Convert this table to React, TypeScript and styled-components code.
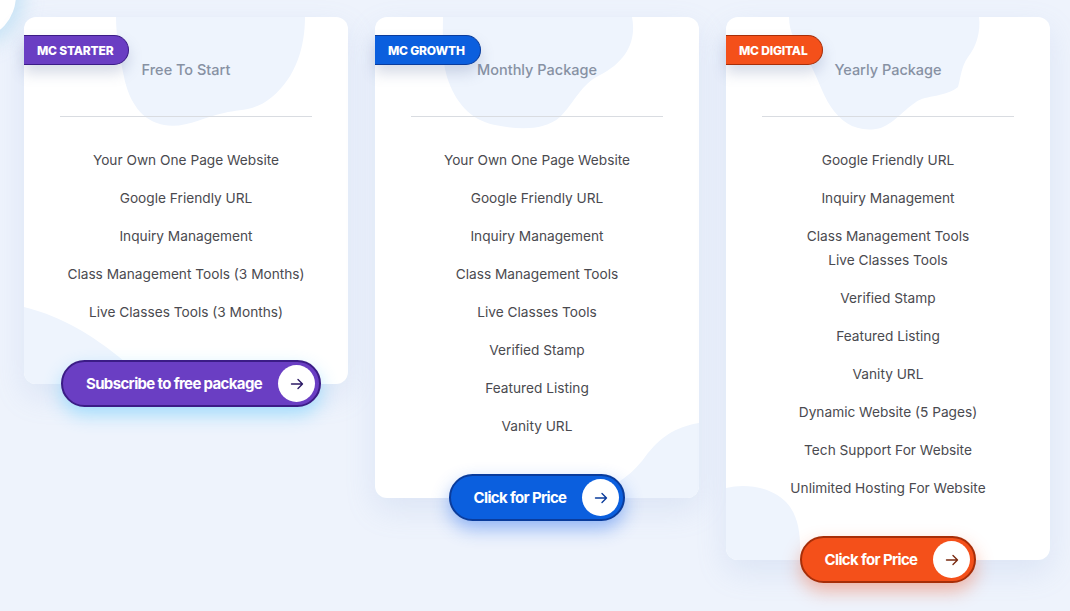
import React from "react";
import styled, { createGlobalStyle } from "styled-components";

const Global = createGlobalStyle`
  html, body { margin: 0; padding: 0; }
  body {
    background: #eef3fc;
    font-family: Inter, "Noto Sans", sans-serif;
    width: 1070px;
    height: 611px;
    overflow: hidden;
  }
`;

type Theme = { main: string; dark: string; glow: string; arrow: string };

const themes: Record<string, Theme> = {
  purple: { main: "#6a3ec3", dark: "#3b1c86", glow: "rgba(80, 200, 255, 0.45)", arrow: "#2c1a66" },
  blue: { main: "#0b5fde", dark: "#0a3c9c", glow: "rgba(40, 110, 240, 0.45)", arrow: "#0a3c9c" },
  orange: { main: "#f4501a", dark: "#a72e08", glow: "rgba(245, 90, 40, 0.4)", arrow: "#7a2a10" },
};

const Page = styled.div`
  position: relative;
  display: flex;
  align-items: flex-start;
  gap: 27px;
  padding: 17px 0 0 24px;
  height: 611px;
  box-sizing: border-box;
  overflow: hidden;
`;

const CornerOrb = styled.div`
  position: absolute;
  left: -62px;
  top: -48px;
  width: 78px;
  height: 86px;
  border-radius: 50%;
  background: #ffffff;
  box-shadow: 0 0 18px 8px rgba(170, 215, 240, 0.55);
`;

const Card = styled.div`
  position: relative;
  width: 324px;
  background: #ffffff;
  border-radius: 12px;
  box-shadow: 0 12px 30px rgba(140, 165, 215, 0.18);
  display: flex;
  flex-direction: column;
  align-items: center;
  padding-top: 43px;
  box-sizing: border-box;
`;

const Blobs = styled.svg`
  position: absolute;
  inset: 0;
  width: 100%;
  height: 100%;
  border-radius: 12px;
  pointer-events: none;
`;

const Badge = styled.div<{ $c: Theme }>`
  position: absolute;
  left: 0;
  top: 18px;
  height: 30px;
  box-sizing: border-box;
  display: flex;
  align-items: center;
  padding: 0 15px 0 13px;
  background: ${(p) => p.$c.main};
  border: 1px solid ${(p) => p.$c.dark};
  border-left: none;
  border-radius: 0 16px 16px 0;
  color: #ffffff;
  font-family: Inter, sans-serif;
  font-weight: 800;
  font-size: 12px;
  letter-spacing: -0.2px;
  box-shadow: 0 8px 14px rgba(90, 110, 160, 0.25);
  z-index: 2;
`;

const Subtitle = styled.div`
  position: relative;
  z-index: 1;
  font-size: 14.5px;
  line-height: 20px;
  font-weight: 500;
  color: #8791a3;
`;

const Divider = styled.div`
  position: relative;
  z-index: 1;
  width: 252px;
  height: 1px;
  background: #d9dce1;
  margin-top: 36px;
`;

const List = styled.ul`
  position: relative;
  z-index: 1;
  list-style: none;
  margin: 33px 0 0;
  padding: 0;
  display: flex;
  flex-direction: column;
  align-items: center;
  gap: 18px;
`;

const Item = styled.li<{ $tight?: boolean }>`
  font-size: 13.7px;
  line-height: 20px;
  color: #4a4a4f;
  white-space: nowrap;
  ${(p) => (p.$tight ? "margin-top: -14px;" : "")}
`;

const Button = styled.button<{ $c: Theme; $shift?: number }>`
  position: relative;
  z-index: 2;
  margin-top: 38px;
  margin-bottom: -23px;
  margin-left: ${(p) => (p.$shift ? `${p.$shift}px` : "0")};
  height: 47px;
  box-sizing: border-box;
  display: flex;
  align-items: center;
  gap: 16px;
  padding: 0 4px 0 23px;
  background: ${(p) => p.$c.main};
  border: 2px solid ${(p) => p.$c.dark};
  border-radius: 24px;
  box-shadow: 0 8px 18px ${(p) => p.$c.glow};
  color: #ffffff;
  font-family: Inter, sans-serif;
  font-weight: 700;
  font-size: 15px;
  letter-spacing: -0.65px;
  cursor: pointer;
`;

const ArrowCircle = styled.span<{ $c: Theme }>`
  width: 37px;
  height: 37px;
  border-radius: 50%;
  background: #ffffff;
  display: flex;
  align-items: center;
  justify-content: center;
  color: ${(p) => p.$c.arrow};
`;

const Arrow = () => (
  <svg width="16" height="16" viewBox="0 0 16 16" fill="none" stroke="currentColor" strokeWidth="1.4" strokeLinecap="round" strokeLinejoin="round">
    <path d="M2.5 8h11M9 3.5 13.5 8 9 12.5" />
  </svg>
);

type Plan = {
  badge: string;
  subtitle: string;
  theme: Theme;
  features: { text: string; tight?: boolean }[];
  button: string;
  shift?: number;
  blobs: React.ReactNode;
};

const BLOB = "#eef4fd";

const plans: Plan[] = [
  {
    badge: "MC STARTER",
    subtitle: "Free To Start",
    theme: themes.purple,
    features: [
      { text: "Your Own One Page Website" },
      { text: "Google Friendly URL" },
      { text: "Inquiry Management" },
      { text: "Class Management Tools (3 Months)" },
      { text: "Live Classes Tools (3 Months)" },
    ],
    button: "Subscribe to free package",
    shift: 10,
    blobs: (
      <>
        <path d="M92 0 H281 C281 30 272 60 248 80 C230 95 215 92 200 96 C180 100 160 112 140 108 C118 104 105 85 100 60 C96 40 92 20 92 0 Z" fill={BLOB} />
        <path d="M0 290 C40 300 70 320 95 340 C110 352 115 360 116 367 H0 Z" fill={BLOB} />
      </>
    ),
  },
  {
    badge: "MC GROWTH",
    subtitle: "Monthly Package",
    theme: themes.blue,
    features: [
      { text: "Your Own One Page Website" },
      { text: "Google Friendly URL" },
      { text: "Inquiry Management" },
      { text: "Class Management Tools" },
      { text: "Live Classes Tools" },
      { text: "Verified Stamp" },
      { text: "Featured Listing" },
      { text: "Vanity URL" },
    ],
    button: "Click for Price",
    blobs: (
      <>
        <path d="M68 0 H257 C262 25 250 45 225 58 C205 68 200 85 185 100 C168 115 140 112 120 108 C95 103 80 85 72 60 C66 40 68 20 68 0 Z" fill={BLOB} />
        <path d="M324 406 C300 410 285 420 270 440 C255 460 240 470 205 481 H324 Z" fill={BLOB} />
      </>
    ),
  },
  {
    badge: "MC DIGITAL",
    subtitle: "Yearly Package",
    theme: themes.orange,
    features: [
      { text: "Google Friendly URL" },
      { text: "Inquiry Management" },
      { text: "Class Management Tools" },
      { text: "Live Classes Tools", tight: true },
      { text: "Verified Stamp" },
      { text: "Featured Listing" },
      { text: "Vanity URL" },
      { text: "Dynamic Website (5 Pages)" },
      { text: "Tech Support For Website" },
      { text: "Unlimited Hosting For Website" },
    ],
    button: "Click for Price",
    blobs: (
      <>
        <path d="M63 0 H253 C255 15 250 30 242 40 C235 50 235 60 232 70 C220 80 200 78 190 85 C175 95 165 110 150 112 C130 115 115 105 105 90 C95 75 90 55 80 40 C70 28 63 15 63 0 Z" fill={BLOB} />
        <path d="M0 471 C20 466 45 470 60 485 C72 498 75 515 74 543 H0 Z" fill={BLOB} />
      </>
    ),
  },
];

const PlanCard = ({ plan }: { plan: Plan }) => (
  <Card>
    <Blobs preserveAspectRatio="none">{plan.blobs}</Blobs>
    <Badge $c={plan.theme}>{plan.badge}</Badge>
    <Subtitle>{plan.subtitle}</Subtitle>
    <Divider />
    <List>
      {plan.features.map((f) => (
        <Item key={f.text} $tight={f.tight}>
          {f.text}
        </Item>
      ))}
    </List>
    <Button $c={plan.theme} $shift={plan.shift}>
      {plan.button}
      <ArrowCircle $c={plan.theme}>
        <Arrow />
      </ArrowCircle>
    </Button>
  </Card>
);

export default function App() {
  return (
    <>
      <Global />
      <Page>
        <CornerOrb />
        {plans.map((p) => (
          <PlanCard key={p.badge} plan={p} />
        ))}
      </Page>
    </>
  );
}
